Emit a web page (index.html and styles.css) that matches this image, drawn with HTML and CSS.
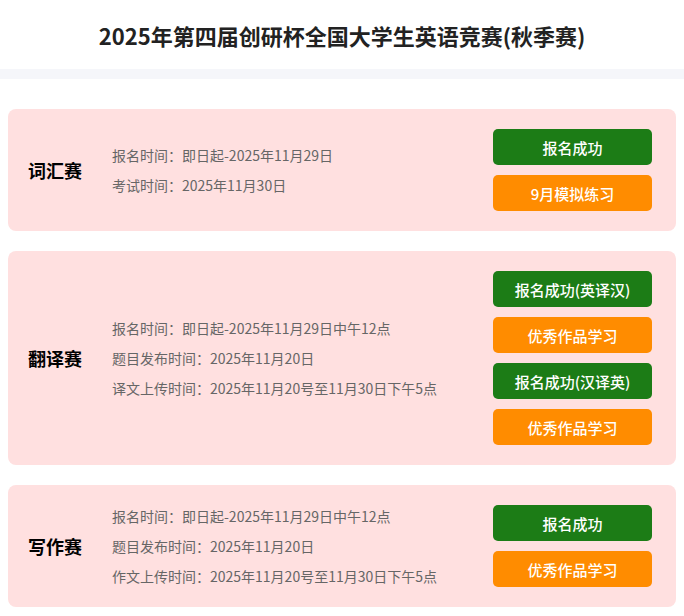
FILE: index.html
```html
<!DOCTYPE html>
<html lang="zh-CN">
<head>
  <meta charset="UTF-8" />
  <meta name="viewport" content="width=device-width, initial-scale=1.0"/>
  <title>2025年第四届创研杯全国大学生英语竞赛(秋季赛)</title>
  <link rel="stylesheet" href="styles.css">
</head>
<body>

  <header>
    <h1>2025年第四届创研杯全国大学生英语竞赛(秋季赛)</h1>
  </header>
  <div class="divider"></div>

  <div class="container">

    <div class="card">
      <div class="card-title">词汇赛</div>
      <div class="info">
        <p>报名时间：即日起-2025年11月29日</p>
        <p>考试时间：2025年11月30日</p>
      </div>
      <div class="actions">
        <button class="btn green">报名成功</button>
        <button class="btn orange">9月模拟练习</button>
      </div>
    </div>

    <div class="card">
      <div class="card-title">翻译赛</div>
      <div class="info">
        <p>报名时间：即日起-2025年11月29日中午12点</p>
        <p>题目发布时间：2025年11月20日</p>
        <p>译文上传时间：2025年11月20号至11月30日下午5点</p>
      </div>
      <div class="actions">
        <button class="btn green">报名成功(英译汉)</button>
        <button class="btn orange">优秀作品学习</button>
        <button class="btn green">报名成功(汉译英)</button>
        <button class="btn orange">优秀作品学习</button>
      </div>
    </div>

    <div class="card">
      <div class="card-title">写作赛</div>
      <div class="info">
        <p>报名时间：即日起-2025年11月29日中午12点</p>
        <p>题目发布时间：2025年11月20日</p>
        <p>作文上传时间：2025年11月20号至11月30日下午5点</p>
      </div>
      <div class="actions">
        <button class="btn green">报名成功</button>
        <button class="btn orange">优秀作品学习</button>
      </div>
    </div>

  </div>

</body>
</html>
```

FILE: styles.css
```css
* { box-sizing: border-box; }
body {
  margin: 0;
  font-family: "Noto Sans CJK SC", "Noto Sans", sans-serif;
  background: #fff;
  color: #333;
}

header {
  height: 69px;
  display: flex;
  align-items: center;
  justify-content: center;
}

header h1 {
  margin: 0;
  font-size: 22px;
  font-weight: 700;
  color: #222;
}

.divider {
  height: 10px;
  background: #f5f6fa;
}

.container {
  padding: 30px 8px 0;
  display: flex;
  flex-direction: column;
  gap: 20px;
}

.card {
  background: #ffe0e0;
  border-radius: 8px;
  padding: 20px 24px 20px 20px;
  display: flex;
  align-items: center;
}

.card-title {
  width: 84px;
  font-size: 18px;
  font-weight: 700;
  color: #000;
}

.info {
  flex: 1;
  display: flex;
  flex-direction: column;
  gap: 8px;
}

.info p {
  margin: 0;
  font-size: 14px;
  line-height: 22px;
  color: #666;
}

.actions {
  width: 159px;
  display: flex;
  flex-direction: column;
  gap: 10px;
}

.btn {
  height: 36px;
  border: none;
  border-radius: 5px;
  color: #fff;
  font-family: inherit;
  font-size: 15px;
  font-weight: 500;
  cursor: pointer;
}

.btn.green { background: #1c7c16; }
.btn.orange { background: #ff8c00; }
```
